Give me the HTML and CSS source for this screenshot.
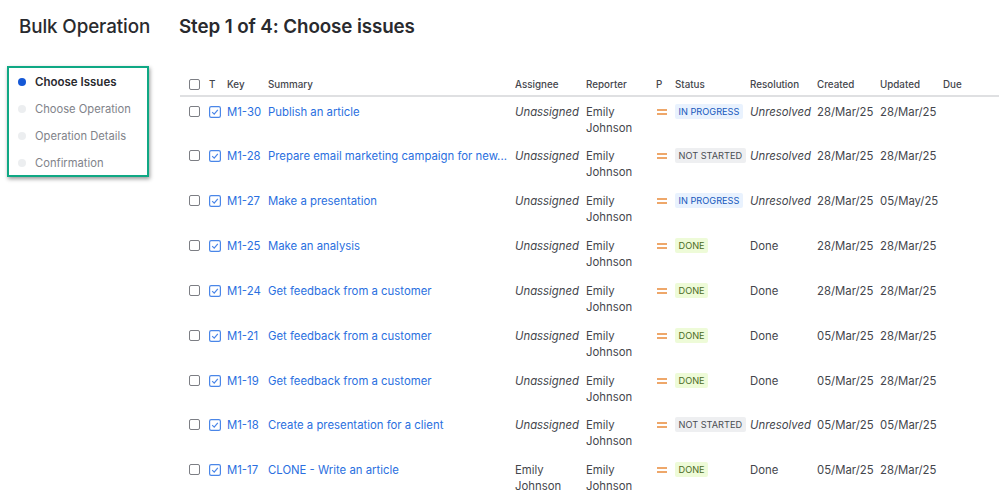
FILE: index.html
```html
<!DOCTYPE html>
<html lang="en">
<head>
<meta charset="utf-8">
<title>Bulk Operation</title>
<link rel="stylesheet" href="styles.css">
</head>
<body>
<div class="page">
  <aside class="side">
    <h2 class="side-title">Bulk Operation</h2>
    <ul class="steps">
      <li class="step current"><span class="dot"></span>Choose Issues</li>
      <li class="step"><span class="dot"></span>Choose Operation</li>
      <li class="step"><span class="dot"></span>Operation Details</li>
      <li class="step"><span class="dot"></span>Confirmation</li>
    </ul>
  </aside>
  <main class="main">
    <h1 class="title">Step 1 of 4: Choose issues</h1>
    <table class="issues">
      <colgroup>
        <col class="c-check"><col class="c-type"><col class="c-key"><col class="c-sum"><col class="c-asg"><col class="c-rep"><col class="c-pri"><col class="c-sta"><col class="c-res"><col class="c-cre"><col class="c-upd"><col class="c-due">
      </colgroup>
      <thead>
        <tr><th><span class="box"></span></th><th>T</th><th>Key</th><th>Summary</th><th>Assignee</th><th>Reporter</th><th>P</th><th>Status</th><th>Resolution</th><th>Created</th><th>Updated</th><th>Due</th></tr>
      </thead>
      <tbody>
        <tr><td><span class="box"></span></td><td><svg class="type" viewBox="0 0 12 12"><rect x=".6" y=".6" width="10.8" height="10.8" rx="1.6"/><path d="M3.2 6.2 5.2 8.2 8.8 3.8"/></svg></td><td><a>M1-30</a></td><td><a>Publish an article</a></td><td class="em">Unassigned</td><td>Emily Johnson</td><td><svg class="pri" viewBox="0 0 10 6"><path d="M0 1H10M0 5H10"/></svg></td><td><span class="lozenge prog">IN PROGRESS</span></td><td class="em">Unresolved</td><td>28/Mar/25</td><td>28/Mar/25</td><td></td></tr>
        <tr><td><span class="box"></span></td><td><svg class="type" viewBox="0 0 12 12"><rect x=".6" y=".6" width="10.8" height="10.8" rx="1.6"/><path d="M3.2 6.2 5.2 8.2 8.8 3.8"/></svg></td><td><a>M1-28</a></td><td><a>Prepare email marketing campaign for new...</a></td><td class="em">Unassigned</td><td>Emily Johnson</td><td><svg class="pri" viewBox="0 0 10 6"><path d="M0 1H10M0 5H10"/></svg></td><td><span class="lozenge none">NOT STARTED</span></td><td class="em">Unresolved</td><td>28/Mar/25</td><td>28/Mar/25</td><td></td></tr>
        <tr><td><span class="box"></span></td><td><svg class="type" viewBox="0 0 12 12"><rect x=".6" y=".6" width="10.8" height="10.8" rx="1.6"/><path d="M3.2 6.2 5.2 8.2 8.8 3.8"/></svg></td><td><a>M1-27</a></td><td><a>Make a presentation</a></td><td class="em">Unassigned</td><td>Emily Johnson</td><td><svg class="pri" viewBox="0 0 10 6"><path d="M0 1H10M0 5H10"/></svg></td><td><span class="lozenge prog">IN PROGRESS</span></td><td class="em">Unresolved</td><td>28/Mar/25</td><td>05/May/25</td><td></td></tr>
        <tr><td><span class="box"></span></td><td><svg class="type" viewBox="0 0 12 12"><rect x=".6" y=".6" width="10.8" height="10.8" rx="1.6"/><path d="M3.2 6.2 5.2 8.2 8.8 3.8"/></svg></td><td><a>M1-25</a></td><td><a>Make an analysis</a></td><td class="em">Unassigned</td><td>Emily Johnson</td><td><svg class="pri" viewBox="0 0 10 6"><path d="M0 1H10M0 5H10"/></svg></td><td><span class="lozenge done">DONE</span></td><td>Done</td><td>28/Mar/25</td><td>28/Mar/25</td><td></td></tr>
        <tr><td><span class="box"></span></td><td><svg class="type" viewBox="0 0 12 12"><rect x=".6" y=".6" width="10.8" height="10.8" rx="1.6"/><path d="M3.2 6.2 5.2 8.2 8.8 3.8"/></svg></td><td><a>M1-24</a></td><td><a>Get feedback from a customer</a></td><td class="em">Unassigned</td><td>Emily Johnson</td><td><svg class="pri" viewBox="0 0 10 6"><path d="M0 1H10M0 5H10"/></svg></td><td><span class="lozenge done">DONE</span></td><td>Done</td><td>28/Mar/25</td><td>28/Mar/25</td><td></td></tr>
        <tr><td><span class="box"></span></td><td><svg class="type" viewBox="0 0 12 12"><rect x=".6" y=".6" width="10.8" height="10.8" rx="1.6"/><path d="M3.2 6.2 5.2 8.2 8.8 3.8"/></svg></td><td><a>M1-21</a></td><td><a>Get feedback from a customer</a></td><td class="em">Unassigned</td><td>Emily Johnson</td><td><svg class="pri" viewBox="0 0 10 6"><path d="M0 1H10M0 5H10"/></svg></td><td><span class="lozenge done">DONE</span></td><td>Done</td><td>05/Mar/25</td><td>28/Mar/25</td><td></td></tr>
        <tr><td><span class="box"></span></td><td><svg class="type" viewBox="0 0 12 12"><rect x=".6" y=".6" width="10.8" height="10.8" rx="1.6"/><path d="M3.2 6.2 5.2 8.2 8.8 3.8"/></svg></td><td><a>M1-19</a></td><td><a>Get feedback from a customer</a></td><td class="em">Unassigned</td><td>Emily Johnson</td><td><svg class="pri" viewBox="0 0 10 6"><path d="M0 1H10M0 5H10"/></svg></td><td><span class="lozenge done">DONE</span></td><td>Done</td><td>05/Mar/25</td><td>28/Mar/25</td><td></td></tr>
        <tr><td><span class="box"></span></td><td><svg class="type" viewBox="0 0 12 12"><rect x=".6" y=".6" width="10.8" height="10.8" rx="1.6"/><path d="M3.2 6.2 5.2 8.2 8.8 3.8"/></svg></td><td><a>M1-18</a></td><td><a>Create a presentation for a client</a></td><td class="em">Unassigned</td><td>Emily Johnson</td><td><svg class="pri" viewBox="0 0 10 6"><path d="M0 1H10M0 5H10"/></svg></td><td><span class="lozenge none">NOT STARTED</span></td><td class="em">Unresolved</td><td>05/Mar/25</td><td>05/Mar/25</td><td></td></tr>
        <tr><td><span class="box"></span></td><td><svg class="type" viewBox="0 0 12 12"><rect x=".6" y=".6" width="10.8" height="10.8" rx="1.6"/><path d="M3.2 6.2 5.2 8.2 8.8 3.8"/></svg></td><td><a>M1-17</a></td><td><a>CLONE - Write an article</a></td><td>Emily Johnson</td><td>Emily Johnson</td><td><svg class="pri" viewBox="0 0 10 6"><path d="M0 1H10M0 5H10"/></svg></td><td><span class="lozenge done">DONE</span></td><td>Done</td><td>05/Mar/25</td><td>28/Mar/25</td><td></td></tr>
      </tbody>
    </table>
  </main>
</div>
</body>
</html>
```
FILE: styles.css
```css
* { box-sizing: border-box; }
html, body { margin: 0; padding: 0; height: 100%; overflow: hidden; background: #fff; }
body { font-family: Inter, "Noto Sans", sans-serif; font-size: 12px; color: #292a2e; }
.page { display: flex; width: 999px; height: 501px; overflow: hidden; }

.side { width: 180px; flex: none; padding: 16px 0 0 7px; }
.side-title { margin: 0 0 28px 12px; font-size: 18.8px; line-height: 22px; font-weight: 500; white-space: nowrap; letter-spacing: -.1px; }
.steps { list-style: none; margin: 0; padding: 0; width: 142px; height: 111px; border: 2px solid #0fa884; box-shadow: 1px 2px 4px rgba(0,0,0,.4); }
.step { display: flex; align-items: center; height: 27px; padding-left: 9px; font-size: 11.2px; color: #81838a; white-space: nowrap; }
.step.current { color: #292a2e; font-size: 11.5px; font-weight: 600; }
.dot { width: 8px; height: 8px; border-radius: 50%; background: #eceef0; margin-right: 9px; flex: none; }
.current .dot { background: #1558d6; }

.main { flex: 1; min-width: 0; }
.title { margin: 16px 0 0 -1px; font-size: 18.8px; line-height: 22px; font-weight: 600; white-space: nowrap; letter-spacing: -.1px; }

.issues { width: 819px; margin-top: 34px; table-layout: fixed; border-collapse: collapse; font-size: 11.35px; }
.c-check { width: 29px; } .c-type { width: 18px; } .c-key { width: 41px; } .c-sum { width: 247px; }
.c-asg { width: 71px; } .c-rep { width: 70px; } .c-pri { width: 19px; } .c-sta { width: 75px; }
.c-res { width: 67px; } .c-cre { width: 63px; } .c-upd { width: 63px; } .c-due { width: 56px; }
th { height: 24px; padding: 2px 0 0; text-align: left; font-size: 9.8px; font-weight: 500; color: #44464c; border-bottom: 2px solid #dfe0e2; vertical-align: middle; }
th:first-child, td:first-child { padding-left: 9px; }
td { height: 45px; padding: 7px 0 0; line-height: 16px; vertical-align: top; color: #44464c; }
tbody tr:nth-child(7) td { height: 44px; }
td.em { font-style: italic; white-space: nowrap; }
a { color: #2a6fe0; white-space: nowrap; }
.box { display: block; width: 11px; height: 11px; border: 1px solid #7c7e84; border-radius: 2px; background: #fff; margin-top: 2px; }
th .box { margin-top: 0; }
.type { display: block; width: 12px; height: 12px; margin-top: 2px; fill: none; stroke: #4a86e8; stroke-width: 1.2; }
.pri { display: block; width: 10px; height: 6px; margin: 5px 0 0 1px; fill: none; stroke: #e98a3a; stroke-width: 1.6; }
.lozenge { display: inline-block; height: 15px; line-height: 15px; padding: 0 3.5px; border-radius: 2px; font-size: 9.2px; font-weight: 400; white-space: nowrap; vertical-align: top; }
.prog { background: #e9f2fe; color: #1558bc; }
.none { background: #eeeff1; color: #4a4d53; }
.done { background: #eefbd8; color: #4c6b1f; }
```
